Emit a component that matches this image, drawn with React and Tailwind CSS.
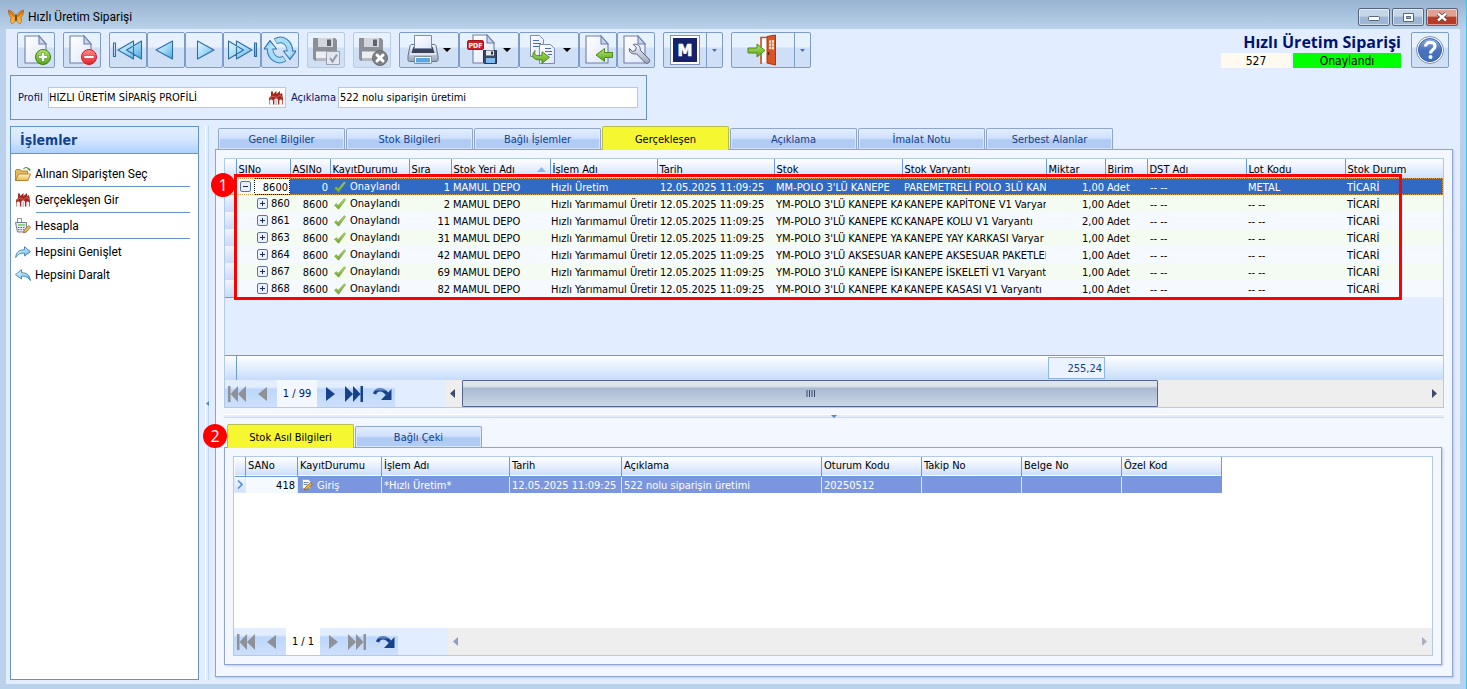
import React from "react";

/* ---------- icons ---------- */

const Svg = ({ w = 32, h = 32, vw = 32, vh = 32, children }) => (
  <svg width={w} height={h} viewBox={`0 0 ${vw} ${vh}`} className="block shrink-0" aria-hidden="true">
    {children}
  </svg>
);

const Defs = () => (
  <svg width="0" height="0" className="absolute" aria-hidden="true">
    <defs>
      <linearGradient id="page" x1="0" y1="0" x2="1" y2="1">
        <stop offset="0" stopColor="#ffffff" />
        <stop offset="1" stopColor="#dfe6fa" />
      </linearGradient>
      <linearGradient id="arrow" x1="0" y1="0" x2="1" y2="1">
        <stop offset="0" stopColor="#eaf8ff" />
        <stop offset="0.5" stopColor="#a5dcf8" />
        <stop offset="1" stopColor="#4ba3dd" />
      </linearGradient>
      <linearGradient id="green" x1="0" y1="0" x2="0" y2="1">
        <stop offset="0" stopColor="#b4e46c" />
        <stop offset="1" stopColor="#55a51c" />
      </linearGradient>
      <linearGradient id="red" x1="0" y1="0" x2="0" y2="1">
        <stop offset="0" stopColor="#ff8d8d" />
        <stop offset="1" stopColor="#e3202c" />
      </linearGradient>
      <linearGradient id="metal" x1="0" y1="0" x2="0" y2="1">
        <stop offset="0" stopColor="#f6f8fc" />
        <stop offset="1" stopColor="#9aa6bd" />
      </linearGradient>
      <linearGradient id="help" x1="0" y1="0" x2="0" y2="1">
        <stop offset="0" stopColor="#8fb0e4" />
        <stop offset="0.5" stopColor="#4a72bd" />
        <stop offset="1" stopColor="#3f6fc4" />
      </linearGradient>
      <linearGradient id="tick" x1="0" y1="0" x2="0" y2="1">
        <stop offset="0" stopColor="#c5e27b" />
        <stop offset="1" stopColor="#6fa525" />
      </linearGradient>
      <linearGradient id="folder" x1="0" y1="0" x2="0" y2="1">
        <stop offset="0" stopColor="#fff3c0" />
        <stop offset="1" stopColor="#e9b64e" />
      </linearGradient>
      <linearGradient id="wing" x1="0" y1="0" x2="0" y2="1">
        <stop offset="0" stopColor="#e07c12" />
        <stop offset="0.6" stopColor="#f5a733" />
        <stop offset="1" stopColor="#f9bf55" />
      </linearGradient>
      <linearGradient id="nav" x1="0" y1="0" x2="0" y2="1">
        <stop offset="0" stopColor="#5f83bd" />
        <stop offset="0.45" stopColor="#15428b" />
        <stop offset="1" stopColor="#15428b" />
      </linearGradient>
    </defs>
  </svg>
);

const Page = ({ x = 6, y = 2, w = 21, h = 27 }) => (
  <g stroke="#6d7fa8" strokeWidth="1.1">
    <path d={`M${x} ${y}h${w - 7}l7 8v${h - 8}h-${w}z`} fill="url(#page)" />
    <path d={`M${x + w - 7} ${y}v8h7z`} fill="#c8d4f0" />
  </g>
);

const NewIcon = () => (
  <Svg>
    <Page x={5} />
    <circle cx="23" cy="23" r="7.5" fill="url(#green)" stroke="#39800e" />
    <path d="M21.5 18.5h3v3h3v3h-3v3h-3v-3h-3v-3h3z" fill="#fff" stroke="#4c9518" strokeWidth=".6" />
  </Svg>
);
const DeleteIcon = () => (
  <Svg>
    <Page x={4} />
    <circle cx="23" cy="23" r="7.5" fill="url(#red)" stroke="#d01722" />
    <path d="M18 21.5h10v3H18z" fill="#fff" stroke="#cf2030" strokeWidth=".6" />
  </Svg>
);
const arrowProps = { fill: "url(#arrow)", stroke: "#2f6ea6", strokeWidth: 1.1, strokeLinejoin: "round" };
const FirstIcon = () => (
  <Svg>
    <path {...arrowProps} d="M1.5 9h2v13.500h-2zM21.500 7v18L6 16zM29.500 7v18L14.500 16z" />
  </Svg>
);
const PrevIcon = () => (
  <Svg>
    <path {...arrowProps} d="M22.500 7v18L6 16z" />
  </Svg>
);
const NextIcon = () => (
  <Svg>
    <path {...arrowProps} d="M9.500 7v18L26 16z" />
  </Svg>
);
const LastIcon = () => (
  <Svg>
    <path {...arrowProps} d="M28.500 9h2v13.500h-2zM10.500 7v18L26 16zM2.500 7v18L17.500 16z" />
  </Svg>
);
const CurvedArrow = () => (
  <g>
    <path d="M11.500 7.500C18 3.500 26 8 26 17.500" fill="none" stroke="#3a7cb4" strokeWidth="6.600" />
    <path {...arrowProps} d="M19.500 17h12.500L26 25.500z" />
    <path d="M11.900 7.300C18 3.500 26 8 26 18.500" fill="none" stroke="#a9ddf7" strokeWidth="4.600" />
  </g>
);
const RefreshIcon = () => (
  <Svg>
    <CurvedArrow />
    <g transform="rotate(180 16 16)">
      <CurvedArrow />
    </g>
  </Svg>
);
const Floppy = () => (
  <g>
    <path d="M3 4h22l2 2v21H5l-2-2z" fill="#8b8f97" />
    <path d="M8 4h15v9H8z" fill="#d3d6dc" />
    <path d="M17 5.500h4v6.500h-4z" fill="#5f646c" />
    <path d="M6 17.500h18v7H6z" fill="#eceef2" />
    <path d="M6 24.500h18V27H6z" fill="#b4b8bf" />
  </g>
);
const SaveCheckIcon = () => (
  <Svg>
    <Floppy />
    <path d="M16.500 17.500h13v13h-13z" fill="#e2e6ee" stroke="#9aa2b0" />
    <path d="M20 24l2.500 3.500L27 20.500" fill="none" stroke="#9299a5" strokeWidth="2" />
  </Svg>
);
const SaveCancelIcon = () => (
  <Svg>
    <Floppy />
    <circle cx="24" cy="24" r="7.500" fill="#7d8085" stroke="#6a6d72" />
    <path d="M21 21l6 6M27 21l-6 6" stroke="#fff" strokeWidth="3" strokeLinecap="round" />
  </Svg>
);
const PrintIcon = () => (
  <Svg>
    <path d="M3 12c0-1 1-1.500 2-1.500h22c1 0 2 .5 2 1.500l2 10v4c0 1-1 1.500-2 1.500H3c-1 0-2-.5-2-1.500v-4z" fill="url(#metal)" stroke="#65738f" />
    <path d="M6 14l1-2h18l1 2 1.500 5h-23z" fill="#39435a" />
    <path d="M7.500 1.500h17v13h-17z" fill="url(#page)" stroke="#7d8baa" />
    <path d="M7.500 22.500h17v7h-17z" fill="#fff" stroke="#7f90b1" />
    <path d="M9 24h14v4.500H9z" fill="#5aa7e4" />
    <path d="M3 20h26" stroke="#fff" />
  </Svg>
);
const PdfIcon = () => (
  <Svg>
    <Page x={6} y={1} w={21} h={28} />
    <rect x="0.500" y="6.500" width="16" height="9" rx="1.500" fill="#cf2027" stroke="#a5141b" />
    <text x="8.500" y="13.800" textAnchor="middle" fontSize="7" fontWeight="700" fill="#fff" className="font-['DejaVu_Sans_Condensed','DejaVu_Sans',sans-serif]">
      PDF
    </text>
    <path d="M16.500 16.500h13v13h-12l-1-1z" fill="#3b475f" stroke="#28324a" />
    <path d="M19 16.500h8v5h-8z" fill="#e4e8f1" />
    <path d="M24 17.500h2v3h-2z" fill="#28324a" />
    <path d="M19 24h9v5h-9z" fill="#7fbcf0" />
  </Svg>
);
const CopyIcon = () => (
  <Svg>
    <path d="M3.500 1.500h9l4 4v17h-13z" fill="url(#page)" stroke="#7b8cb6" />
    <path d="M6 6.500h6M6 9.500h8M6 12.500h8" stroke="#4d6cb0" />
    <path d="M12.500 10.500h11l4 4v15h-15z" fill="url(#page)" stroke="#7b8cb6" />
    <path d="M18 14.500h6M18 17.500h7M21 20.500h4" stroke="#4d6cb0" />
    <path d="M8 16.500c-1.500 6.500 2.500 5 7 4.800v-3.500l7.500 5.500-7.500 6v-3.500c-7 1-12.500-2.500-7-9.300z" fill="url(#green)" stroke="#4e8a17" />
  </Svg>
);
const ImportIcon = () => (
  <Svg>
    <Page x={4} y={2} w={22} h={27} />
    <path d="M14 21l8.500-6.500v4h8v5h-8v4z" fill="url(#green)" stroke="#4e8a17" />
  </Svg>
);
const WrenchIcon = () => (
  <Svg>
    <Page x={4} y={2} w={21} h={27} />
    <path
      d="M9.500 14.500l3 3 3-1 .8-3-3-3c4-1.200 7.500 1.500 7 5.800l9 9c1.500 3-1.800 5.200-4 3.500l-8.800-9c-4.200.8-8-1.500-7-5.300z"
      fill="url(#metal)"
      stroke="#55617c"
    />
  </Svg>
);
const MIcon = () => (
  <Svg>
    <rect x="1.500" y="1.500" width="29" height="29" fill="#fff" stroke="#7f8fb8" />
    <rect x="4" y="4" width="24" height="24" fill="#18216b" />
    <text x="16" y="21.500" textAnchor="middle" fontSize="15" fontWeight="700" fill="#fff" stroke="#fff" strokeWidth=".6" className="font-['DejaVu_Sans',sans-serif]">
      M
    </text>
  </Svg>
);
const DoorIcon = () => (
  <Svg>
    <path d="M14 30V3.500h6" fill="none" stroke="#cf4b22" strokeWidth="1.600" />
    <path d="M15 4.500h6v24h-6z" fill="#fff" />
    <path d="M20 2.500L28.500 1v30L20 29z" fill="#d95526" stroke="#ac3510" />
    <path d="M22 6.500l5-.5v9.500l-5-.5z" fill="#fbe3cf" />
    <path d="M24.500 6v9.500M22 9.200h5M22 12.200h5" stroke="#b87546" strokeWidth=".8" />
    <path d="M21.500 18v3" stroke="#6f1d08" strokeWidth="1.500" />
    <path d="M1 14h9v-4l8 6.500-8 6.500v-4H1z" fill="url(#green)" stroke="#4e8a17" />
  </Svg>
);
const HelpIcon = () => (
  <Svg>
    <circle cx="16" cy="16" r="13.500" fill="#fff" stroke="#7d8fb4" />
    <circle cx="16" cy="16" r="11.500" fill="url(#help)" stroke="#3d62a8" />
    <path d="M11.500 12.500c.2-5.500 9.500-5.500 9.500-.3 0 3.800-4.500 3.500-4.500 7.300" fill="none" stroke="#fff" strokeWidth="3.200" />
    <circle cx="16.500" cy="23" r="2" fill="#fff" />
  </Svg>
);

const ButterflyIcon = () => (
  <Svg w={16} h={16} vw={16} vh={16}>
    <path d="M7.500 7.500C6 3.500 3.500 1.500.5 1c-.2 3.500.7 6 2.700 7.500-1.200 1.800-1 4.500.8 6.500 2-.8 3.200-2.500 3.500-5z" fill="url(#wing)" stroke="#8a4a0c" strokeWidth=".5" />
    <path d="M8.500 7.500C10 3.500 12.500 1.500 15.500 1c.2 3.500-.7 6-2.700 7.500 1.200 1.800 1 4.500-.8 6.500-2-.8-3.200-2.500-3.500-5z" fill="url(#wing)" stroke="#8a4a0c" strokeWidth=".5" />
    <path d="M8 5.500v6.500" stroke="#5a3512" strokeWidth="1.400" />
    <path d="M1.300 2.300l5 5.500M14.700 2.300l-5 5.500" stroke="#a55a0e" strokeWidth=".8" />
  </Svg>
);
const FactoryIcon = () => (
  <Svg w={16} h={16} vw={16} vh={16}>
    <path d="M1 14.500V8l2-2V1.500h2V4l3.500-3v3L12 1v3l2-1 1 5.500v6z" fill="#a3281f" />
    <path d="M1.500 8.500L5 6l3.500 1.500L12 5l3 3.500" fill="none" stroke="#cf6157" strokeWidth="1" />
    <path d="M1.500 15v-4c0-2 3.500-2 3.500 0v4zM6.300 15v-5c0-2 3.700-2 3.700 0v5zM11.300 15v-4c0-2 3-2 3 0v4z" fill="#f3f1f3" />
    <path d="M8.200 10v5" stroke="#9aa0ae" strokeWidth=".8" />
  </Svg>
);
const FolderIcon = () => (
  <Svg w={16} h={16} vw={16} vh={16}>
    <path d="M.500 14.500V4.500l1-1H5l1 1.500h6.500v9.500z" fill="#e8b85a" stroke="#a97a28" strokeWidth=".9" />
    <path d="M.800 14.500L3.500 8h12L13 14.500z" fill="url(#folder)" stroke="#b0812e" strokeWidth=".9" />
    <path d="M8.500 3c1.500-2 4-2 5 0" fill="none" stroke="#3c9a2a" strokeWidth="1.200" />
    <path d="M11.800 2.500h3.400v2.800z" fill="#3c9a2a" />
  </Svg>
);
const CalcIcon = () => (
  <Svg w={16} h={16} vw={16} vh={16}>
    <path d="M2.500.5h4v4h-4z" fill="#fff" stroke="#7d8797" strokeWidth=".9" />
    <path d="M.5 4.500h11v9.500H2.500z" fill="#e6eaf3" stroke="#66728c" strokeWidth=".9" />
    <path d="M3 6h7v1.800H3z" fill="#8fcf7c" />
    <path d="M3 9.500h7M3 11.700h7" stroke="#5c6a88" strokeDasharray="1.500 1" />
    <path d="M8.500 15l.8-3 4.500-4.500 1.900 1.900-4.500 4.500z" fill="#f1b95c" stroke="#9c6b26" strokeWidth=".8" />
  </Svg>
);
const ForwardIcon = () => (
  <Svg w={16} h={16} vw={16} vh={16}>
    <path d="M.700 13.500C1 8 4.500 5.500 9.500 5.800V2.700l6 5-6 4.300V9.200C6 8.800 3 10 .700 13.500z" fill="url(#arrow)" stroke="#4180b4" strokeWidth=".9" />
  </Svg>
);
const BackIcon = () => (
  <Svg w={16} h={16} vw={16} vh={16}>
    <path d="M15.300 13.500C15 8 11.500 5.500 6.500 5.800V2.700l-6 5 6 4.300V9.200c3.500-.4 6.500.8 8.800 4.300z" fill="url(#arrow)" stroke="#4180b4" strokeWidth=".9" />
  </Svg>
);
const TickIcon = () => (
  <Svg w={12} h={12} vw={12} vh={12}>
    <path d="M.600 7.200l1.600-1.500 2 1.900L10.300.800l1.200.9L4.600 11.200z" fill="url(#tick)" stroke="#6c9c2c" strokeWidth=".7" />
  </Svg>
);
const EntryIcon = () => (
  <Svg w={12} h={12} vw={12} vh={12}>
    <path d="M1.500.500h6l2 2v7h-8z" fill="#fdfdff" stroke="#8da0cc" strokeWidth=".8" />
    <path d="M2.500 3.500h5M2.500 5.500h4" stroke="#6c86c8" />
    <path d="M3.500 11.200l.8-2.700 5.200-5 1.800 1.800-5.200 5z" fill="#f3b23a" stroke="#8f611b" strokeWidth=".8" />
  </Svg>
);

/* ---------- toolbar pieces ---------- */

const btn =
  "h-9 shrink-0 rounded-[2px] border border-[#7d9cc9] bg-linear-to-b from-[#e8f1fe] from-40% to-[#cfe0f6] to-45% flex items-center justify-center";

const IconButton = ({ label, children, disabled }) => (
  <button type="button" aria-label={label} disabled={disabled} className={`${btn} w-[38px] disabled:border-[#b9cce6]`}>
    {children}
  </button>
);

const MenuButton = ({ label, children }) => (
  <button type="button" aria-label={label} className={`${btn} w-[60px] gap-1`}>
    {children}
    <Svg w={8} h={4} vw={8} vh={4}>
      <path d="M0 0h8L4 4z" fill="#000" />
    </Svg>
  </button>
);

const SplitButton = ({ label, children, wide }) => (
  <div className={`${btn} ${wide ? "w-20" : "w-[60px]"}`}>
    <button type="button" aria-label={label} className="flex h-full flex-1 items-center justify-center">
      {children}
    </button>
    <button type="button" aria-label={`${label} seçenekleri`} className="flex h-full w-4 items-center justify-center border-l border-[#7d9cc9]">
      <Svg w={5} h={3} vw={5} vh={3}>
        <path d="M0 0h5L2.500 3z" fill="#3f73bd" />
      </Svg>
    </button>
  </div>
);

const Toolbar = () => (
  <div className="flex items-start pt-[3px] pr-[11px] pl-[11px]">
    <div className="flex gap-2" role="toolbar" aria-label="Araç çubuğu">
      <IconButton label="Yeni"><NewIcon /></IconButton>
      <IconButton label="Sil"><DeleteIcon /></IconButton>
      <div className="flex">
        <IconButton label="İlk"><FirstIcon /></IconButton>
        <IconButton label="Önceki"><PrevIcon /></IconButton>
        <IconButton label="Sonraki"><NextIcon /></IconButton>
        <IconButton label="Son"><LastIcon /></IconButton>
        <IconButton label="Yenile"><RefreshIcon /></IconButton>
      </div>
      <IconButton label="Kaydet" disabled><SaveCheckIcon /></IconButton>
      <IconButton label="Vazgeç" disabled><SaveCancelIcon /></IconButton>
      <div className="flex">
        <MenuButton label="Yazdır"><PrintIcon /></MenuButton>
        <MenuButton label="PDF"><PdfIcon /></MenuButton>
        <MenuButton label="Kopyala"><CopyIcon /></MenuButton>
        <IconButton label="Aktar"><ImportIcon /></IconButton>
        <IconButton label="Ayarlar"><WrenchIcon /></IconButton>
      </div>
      <SplitButton label="M"><MIcon /></SplitButton>
      <SplitButton label="Çıkış" wide><DoorIcon /></SplitButton>
    </div>
    <div className="ml-auto mr-[10px] flex flex-col items-end">
      <h1 className="h-[21px] text-[16px] leading-[21px] font-bold text-[#00136f] font-['Open_Sans',sans-serif]">Hızlı Üretim Siparişi</h1>
      <div className="flex gap-[2px] text-center text-[12px] leading-4">
        <output className="h-[15px] w-[70px] bg-[#fffaf0]">527</output>
        <output className="h-[15px] w-[108px] bg-[#00ff00]">Onaylandı</output>
      </div>
    </div>
    <IconButton label="Yardım"><HelpIcon /></IconButton>
  </div>
);

/* ---------- tabs ---------- */

const Tab = ({ active, children }) => (
  <button
    type="button"
    role="tab"
    aria-selected={active}
    className={
      active
        ? "relative z-10 -mb-px h-6 w-[127px] rounded-t-[2px] border border-b-0 border-[#b9bd4c] bg-[#f5f730] pt-[2px] text-black"
        : "h-[21px] w-[127px] rounded-t-[2px] border border-b-0 border-[#8fa5cf] bg-linear-to-b from-[#dfebff] from-10% via-[#d0e1fd] via-45% to-[#b0cbf4] to-55% pt-[2px] text-[#15428b] inset-ring inset-ring-[#e6f0ff]/70"
    }
  >
    {children}
  </button>
);

const Tabs = ({ items, current, label }) => (
  <div role="tablist" aria-label={label} className="flex h-[23px] items-end gap-px pl-[3px]">
    {items.map((t) => (
      <Tab key={t} active={t === current}>{t}</Tab>
    ))}
  </div>
);

/* ---------- data ---------- */

const columns = [
  ["SINo", "w-[54px]"],
  ["ASINo", "w-10"],
  ["KayıtDurumu", "w-[79px]"],
  ["Sıra", "w-[42px]"],
  ["Stok Yeri Adı", "w-[99px]"],
  ["İşlem Adı", "w-[107px]"],
  ["Tarih", "w-[117px]"],
  ["Stok", "w-32"],
  ["Stok Varyantı", "w-36"],
  ["Miktar", "w-[59px]"],
  ["Birim", "w-[42px]"],
  ["DST Adı", "w-[99px]"],
  ["Lot Kodu", "w-[99px]"],
  ["Stok Durum", "w-auto"],
];

const rows = [
  { no: "8600", parent: "0", order: "1", op: "Hızlı Üretim", stock: "MM-POLO 3'LÜ KANEPE", variant: "PAREMETRELİ POLO 3LÜ KAN", qty: "1,00", lot: "METAL", root: true },
  { no: "860", parent: "8600", order: "2", op: "Hızlı Yarımamul Üretim", stock: "YM-POLO 3'LÜ KANEPE KA", variant: "KANEPE KAPİTONE V1 Varyar", qty: "1,00", lot: "-- --" },
  { no: "861", parent: "8600", order: "11", op: "Hızlı Yarımamul Üretim", stock: "YM-POLO 3'LÜ KANEPE KO", variant: "KANAPE KOLU V1 Varyantı", qty: "2,00", lot: "-- --" },
  { no: "863", parent: "8600", order: "31", op: "Hızlı Yarımamul Üretim", stock: "YM-POLO 3'LÜ KANEPE YA", variant: "KANEPE YAY KARKASI Varyar", qty: "1,00", lot: "-- --" },
  { no: "864", parent: "8600", order: "42", op: "Hızlı Yarımamul Üretim", stock: "YM-POLO 3'LÜ AKSESUAR", variant: "KANEPE AKSESUAR PAKETLEM", qty: "1,00", lot: "-- --" },
  { no: "867", parent: "8600", order: "69", op: "Hızlı Yarımamul Üretim", stock: "YM-POLO 3'LÜ KANEPE İSK", variant: "KANEPE İSKELETİ V1 Varyantı", qty: "1,00", lot: "-- --" },
  { no: "868", parent: "8600", order: "82", op: "Hızlı Yarımamul Üretim", stock: "YM-POLO 3'LÜ KANEPE KA", variant: "KANEPE KASASI V1 Varyantı", qty: "1,00", lot: "-- --" },
];

const Expander = ({ open }) => (
  <button type="button" aria-label={open ? "Daralt" : "Genişlet"} className="shrink-0">
    <Svg w={11} h={11} vw={11} vh={11}>
      <rect x=".5" y=".5" width="10" height="10" rx="1.500" fill="#e9effb" stroke="#5f7395" />
      <path d={open ? "M3 5.500h5" : "M3 5.500h5M5.500 3v5"} stroke="#1c2c52" />
    </Svg>
  </button>
);

const Clip = ({ children }) => <div className="overflow-hidden whitespace-nowrap">{children}</div>;

const headCell = "h-[19px] overflow-hidden border-l border-[#6a9adb] p-0 pl-[2px] text-left font-normal whitespace-nowrap";
const headRow = "bg-linear-to-b from-white to-[#cfe0fb]";

const Badge = ({ children, place }) => (
  <span className={`absolute z-30 flex size-6 items-center justify-center rounded-full bg-[#ff0000] text-[16px] leading-6 text-white font-['Open_Sans',sans-serif] ${place}`}>
    {children}
  </span>
);

const DetailTable = () => (
  <table className="w-full table-fixed border-collapse">
    <colgroup>
      <col className="w-[11px]" />
      {columns.map(([name, w]) => (
        <col key={name} className={w} />
      ))}
    </colgroup>
    <thead className="leading-4">
      <tr className={headRow}>
        <th className="p-0" aria-label="Satır" />
        {columns.map(([name]) => (
          <th key={name} scope="col" className={`${headCell} pt-[2px]`}>
            {name === "Stok Yeri Adı" ? (
              <span className="flex items-center justify-between pr-1">
                {name}
                <Svg w={9} h={5} vw={9} vh={5}>
                  <path d="M0 5h9L4.500 0z" fill="#8fb5ea" />
                </Svg>
              </span>
            ) : (
              name
            )}
          </th>
        ))}
      </tr>
    </thead>
    <tbody className="leading-[15px]">
      {rows.map((r, i) => {
        const tone = r.root
          ? "bg-[#316ac5] text-white outline-1 -outline-offset-1 outline-dotted outline-[#d29a4a]"
          : i % 2
            ? "bg-[#f4fcf2]"
            : "bg-[#f4faff]";
        return (
          <tr key={r.no} className={`h-[17px] ${tone} [&>td]:p-0`}>
            <td className="bg-linear-to-b from-[#eef5ff] to-[#c6dbfa]" />
            <td className={`text-black ${i % 2 ? "bg-[#f4fcf2]" : "bg-[#f4faff]"}`}>
              {r.root ? (
                <div className="flex h-[17px] items-center gap-[3px] pl-1">
                  <Expander open />
                  <span className="h-[17px] flex-1 border border-dotted border-black bg-white pr-px text-right leading-[17px]">{r.no}</span>
                </div>
              ) : (
                <div className="flex h-[17px] items-center gap-[3px] overflow-hidden pl-[21px]">
                  <Expander />
                  <span className="leading-[17px]">{r.no}</span>
                </div>
              )}
            </td>
            <td><div className="pt-[2px] pr-[2px] text-right">{r.parent}</div></td>
            <td>
              <div className="flex h-[17px] items-center gap-1 pl-1 whitespace-nowrap">
                <TickIcon />
                <span className="leading-[17px]">Onaylandı</span>
              </div>
            </td>
            <td><div className="pt-[2px] pr-px text-right">{r.order}</div></td>
            <td><div className="pt-[2px] pl-[2px]"><Clip>MAMUL DEPO</Clip></div></td>
            <td><div className="pt-[2px] pl-px"><Clip>{r.op}</Clip></div></td>
            <td><div className="pt-[2px] pl-[3px]"><Clip>12.05.2025 11:09:25</Clip></div></td>
            <td><div className="pt-[2px] pl-[2px]"><Clip>{r.stock}</Clip></div></td>
            <td><div className="pt-[2px] pl-[2px]"><Clip>{r.variant}</Clip></div></td>
            <td><div className="pt-[2px] pr-px text-right">{r.qty}</div></td>
            <td><div className="pt-[2px] pl-[2px]">Adet</div></td>
            <td><div className="pt-[2px] pl-[3px]">-- --</div></td>
            <td><div className="pt-[2px] pl-[2px]">{r.lot}</div></td>
            <td><div className="pt-[2px] pl-[2px]">TİCARİ</div></td>
          </tr>
        );
      })}
    </tbody>
  </table>
);

const glyphs = {
  first: "M0 0h2.500v16H0zM10 0v16L2.500 8zM18 0v16L10 8z",
  prev: "M9 1v14L0 8z",
  next: "M0 1v14l9-7z",
  last: "M15.500 0H18v16h-2.500zM8 0v16l7.500-8zM0 0v16l8-8z",
};

const NavButton = ({ kind, label, off }) => (
  <button type="button" aria-label={label} disabled={off} className="shrink-0">
    {kind === "jump" ? (
      <Svg w={19} h={14} vw={19} vh={14}>
        <path d="M1.500 7C3.500 1.500 10 1 14 7" fill="none" stroke="url(#nav)" strokeWidth="3.400" />
        <path d="M18.500 2v11H8z" fill="#15428b" />
      </Svg>
    ) : (
      <Svg w={kind === "first" || kind === "last" ? 18 : 9} h={16} vw={kind === "first" || kind === "last" ? 18 : 9} vh={16}>
        <path d={glyphs[kind]} fill={off ? "#8e9298" : "#15428b"} />
      </Svg>
    )}
  </button>
);

const Navigator = ({ text, off, textTone, children }) => {
  const seg = "flex h-full items-center bg-linear-to-b from-[#e2eeff] from-25% via-[#bdd7fc] via-35% to-[#cde0fb]";
  return (
    <div className="flex h-[27px] items-center bg-[#e2eeff]">
      <div className={`${seg} w-[52px] gap-3 pl-[3px]`}>
        <NavButton kind="first" label="İlk kayıt" off />
        <NavButton kind="prev" label="Önceki kayıt" off />
      </div>
      <span className={`flex h-full items-center justify-center ${textTone}`}>{text}</span>
      <div className={`${seg} w-[78px] gap-[10px] pl-[9px]`}>
        <NavButton kind="next" label="Sonraki kayıt" off={off} />
        <NavButton kind="last" label="Son kayıt" off={off} />
        <NavButton kind="jump" label="Kayda git" />
      </div>
      {children}
    </div>
  );
};

const ScrollArrow = ({ dir, tone }) => (
  <Svg w={5} h={9} vw={5} vh={9}>
    <path d={dir === "left" ? "M5 0v9L0 4.500z" : "M0 0v9l5-4.500z"} fill={tone} />
  </Svg>
);

const Splitter = ({ vertical }) =>
  vertical ? (
    <div role="separator" aria-orientation="vertical" className="mx-[6px] flex w-1 items-center border-r border-l border-r-[#bcd8fd] border-l-white bg-[#e2eeff]">
      <Svg w={3} h={5} vw={3} vh={5}>
        <path d="M3 0v5L0 2.500z" fill="#4f84cf" />
      </Svg>
    </div>
  ) : (
    <div role="separator" className="mt-[6px] flex h-1 items-center justify-center border-t border-b border-t-white border-b-[#c3dcfd] bg-[#e2eeff]">
      <Svg w={6} h={3} vw={6} vh={3}>
        <path d="M0 0h6L3 3z" fill="#4f84cf" />
      </Svg>
    </div>
  );

const lowerColumns = [
  ["SANo", "w-[52px]"],
  ["KayıtDurumu", "w-[84px]"],
  ["İşlem Adı", "w-32"],
  ["Tarih", "w-28"],
  ["Açıklama", "w-[200px]"],
  ["Oturum Kodu", "w-[100px]"],
  ["Takip No", "w-[100px]"],
  ["Belge No", "w-[100px]"],
  ["Özel Kod", "w-[100px]"],
];

const LowerTable = () => (
  <table className="w-[987px] table-fixed border-collapse border-r border-[#6a9adb]">
    <colgroup>
      <col className="w-[11px]" />
      {lowerColumns.map(([name, w]) => (
        <col key={name} className={w} />
      ))}
    </colgroup>
    <thead className="leading-4">
      <tr className={`${headRow} border-b border-[#6a9adb]`}>
        <th className="p-0" aria-label="Satır" />
        {lowerColumns.map(([name]) => (
          <th key={name} scope="col" className={headCell}>{name}</th>
        ))}
      </tr>
    </thead>
    <tbody className="leading-[15px]">
      <tr className="h-[17px] bg-[#7b96df] text-white [&>td]:border-l [&>td]:border-[#dfe8fb] [&>td]:p-0">
        <td className="bg-linear-to-b from-[#f4f9ff] to-[#cfe0fb]">
          <div className="pl-[2px]">
            <Svg w={6} h={9} vw={6} vh={9}>
              <path d="M1 .500l4 4-4 4" fill="none" stroke="#5b8fd8" strokeWidth="1.600" />
            </Svg>
          </div>
        </td>
        <td className="bg-[#f4faff] text-black"><div className="pt-px pr-[2px] text-right">418</div></td>
        <td>
          <div className="flex items-center gap-1 pt-px pl-[3px]"><EntryIcon />Giriş</div>
        </td>
        <td><div className="pt-px pl-[2px]">*Hızlı Üretim*</div></td>
        <td><div className="pt-px pl-[2px] whitespace-nowrap">12.05.2025 11:09:25</div></td>
        <td><div className="pt-px pl-[2px]">522 nolu siparişin üretimi</div></td>
        <td><div className="pt-px pl-[2px]">20250512</div></td>
        <td /><td /><td />
      </tr>
    </tbody>
  </table>
);

/* ---------- sidebar ---------- */

const actions = [
  ["Alınan Siparişten Seç", FolderIcon, true],
  ["Gerçekleşen Gir", FactoryIcon, true],
  ["Hesapla", CalcIcon, true],
  ["Hepsini Genişlet", ForwardIcon, false],
  ["Hepsini Daralt", BackIcon, false],
];

const Sidebar = () => (
  <aside className="flex w-[189px] shrink-0 flex-col border border-[#6593cf] bg-white">
    <h2 className="h-[27px] border-b border-[#6593cf] bg-linear-to-b from-[#e3efff] via-[#d3e5ff] to-[#aed1ff] pl-[9px] text-[14px] leading-[26px] font-bold text-[#15428b]">
      İşlemler
    </h2>
    <ul className="pt-2 text-[12px] font-[Roboto,sans-serif]">
      {actions.map(([name, Icon, line]) => (
        <li key={name} className={line ? "h-[26px]" : "h-[23px]"}>
          <button type="button" className="flex h-6 w-full items-center gap-1 pl-1 text-left">
            <Icon />
            {name}
          </button>
          {line && <div className="mr-2 ml-[25px] h-px bg-[#6593cf]" />}
        </li>
      ))}
    </ul>
  </aside>
);

/* ---------- window ---------- */

const caption = "flex h-[18px] w-8 items-center justify-center rounded-[2px] border border-[#56657d] inset-ring inset-ring-white/50";

export default function App() {
  return (
    <div className="flex min-h-screen flex-col border-r border-[#35c9f1] bg-[#b9d1ea] pb-[5px] text-[11px] leading-[14px] text-black font-['DejaVu_Sans_Condensed','DejaVu_Sans',sans-serif]">
      <Defs />
      <header className="flex h-[29px] items-center bg-linear-to-b from-[#99b4d1] to-[#b9d1ea] pt-[5px] pr-2 pl-2">
        <ButterflyIcon />
        <span className="ml-1 text-[12px] leading-4 font-[Roboto,sans-serif]">Hızlı Üretim Siparişi</span>
        <div className="ml-auto flex gap-[2px]">
          <button type="button" aria-label="Simge durumuna küçült" className={`${caption} bg-linear-to-b from-[#c6d6e9] from-45% to-[#9db6d3] to-50%`}>
            <Svg w={12} h={10} vw={12} vh={10}><rect x=".5" y="4.500" width="11" height="4" rx="1" fill="#fff" stroke="#56657d" /></Svg>
          </button>
          <button type="button" aria-label="Ekranı kapla" className={`${caption} bg-linear-to-b from-[#c6d6e9] from-45% to-[#9db6d3] to-50%`}>
            <Svg w={11} h={9} vw={11} vh={9}>
              <path d="M.500.500h10v8H.500zM3.500 3.500v2h4v-2z" fill="#fff" stroke="#56657d" fillRule="evenodd" />
            </Svg>
          </button>
          <button type="button" aria-label="Kapat" className={`${caption} border-[#5a1f1f] bg-linear-to-b from-[#e0a194] from-45% to-[#b93a28] to-50%`}>
            <Svg w={12} h={10} vw={12} vh={10}>
              <path d="M2 1.500l8 7M10 1.500l-8 7" stroke="#5a3a3a" strokeWidth="4" />
              <path d="M2 1.500l8 7M10 1.500l-8 7" stroke="#fff" strokeWidth="2.400" />
            </Svg>
          </button>
        </div>
      </header>

      <main className="mr-[6px] ml-[6px] flex flex-1 flex-col bg-[#e2eeff] pb-1">
        <Toolbar />

        <form className="mt-[7px] ml-1 flex h-[45px] w-[637px] items-center border border-[#6593cf] pr-2 pl-[7px]" onSubmit={(e) => e.preventDefault()}>
          <label htmlFor="profile" className="w-[30px] text-[#00136f]">Profil</label>
          <div className="flex h-[21px] w-[238px] items-center border border-[#b3c9e8] bg-white pr-px">
            <input id="profile" defaultValue="HIZLI ÜRETİM SİPARİŞ PROFİLİ" className="h-full min-w-0 flex-1 outline-none" />
            <button type="button" aria-label="Profil seç"><FactoryIcon /></button>
          </div>
          <label htmlFor="note" className="ml-[5px] w-[47px] whitespace-nowrap text-[#00136f]">Açıklama</label>
          <input id="note" defaultValue="522 nolu siparişin üretimi" className="h-[21px] min-w-0 flex-1 border border-[#b3c9e8] bg-white pl-px outline-none" />
        </form>

        <div className="mt-[6px] flex flex-1 pr-[7px] pl-1">
          <Sidebar />
          <Splitter vertical />

          <section className="mb-[3px] flex min-w-0 flex-1 flex-col">
            <Tabs
              label="Sipariş bölümleri"
              current="Gerçekleşen"
              items={["Genel Bilgiler", "Stok Bilgileri", "Bağlı İşlemler", "Gerçekleşen", "Açıklama", "İmalat Notu", "Serbest Alanlar"]}
            />
            <div className="flex flex-1 flex-col border border-[#8fa5cf] bg-[#f3f7ff] px-2 pt-2 pb-[11px] shadow-[1px_1px_2px_#b4c8ea]">
              <div className="relative border border-[#b3c9e8] bg-[#e2eeff]">
                <Badge place="-left-[14px] top-[14px]">1</Badge>
                <div className="pointer-events-none absolute top-[15px] right-[41px] left-[9px] z-20 h-[126px] border-3 border-[#ff0000]" />
                <DetailTable />
                <div className="h-[58px]">
                  <div className="h-px w-[11px] bg-[#6a9adb]" />
                </div>
                <div className="flex h-[25px] border-t border-[#6a9adb] bg-linear-to-b from-white to-[#c6dcfb]">
                  <div className="w-3 border-r border-[#6a9adb]" />
                  <output className="mt-px ml-[811px] h-[22px] w-[57px] border border-[#8fb5ea] bg-[#eaf3ff] pr-[2px] text-right leading-[22px] text-[#15428b]">255,24</output>
                </div>
                <Navigator text="1 / 99" textTone="w-10 bg-[#f3f7ff] text-[#00136f]">
                  <div className="ml-[50px] flex h-full flex-1 items-center bg-[#eeeeee] pr-[6px] pl-[5px]">
                    <ScrollArrow dir="left" tone="#3f4b6b" />
                    <div className="ml-[7px] flex h-full flex-33 items-center justify-center rounded-[1px] border border-[#56658f] bg-linear-to-b from-[#dce4ec] from-20% via-[#a9bad0] via-30% to-[#cbd8e6]">
                      <Svg w={9} h={7} vw={9} vh={7}>
                        <path d="M1 0v7M3.500 0v7M6 0v7M8.500 0v7" stroke="#3f4b6b" />
                      </Svg>
                    </div>
                    <span className="flex-13" />
                    <ScrollArrow dir="right" tone="#3f4b6b" />
                  </div>
                </Navigator>
              </div>

              <Splitter />

              <div className="relative mt-[6px]">
                <Badge place="-left-[21px] top-0">2</Badge>
                <Tabs label="Alt bölümler" current="Stok Asıl Bilgileri" items={["Stok Asıl Bilgileri", "Bağlı Çeki"]} />
              </div>
              <div className="mr-[2px] flex flex-1 flex-col border border-[#8fa5cf] bg-[#f3f7ff] p-2 shadow-[1px_1px_2px_#b4c8ea]">
                <div className="flex flex-1 flex-col border border-[#b3c9e8] bg-white">
                  <LowerTable />
                  <div className="mt-auto">
                    <Navigator text="1 / 1" off textTone="w-[34px] bg-white text-black">
                      <div className="ml-[50px] flex h-full flex-1 items-center justify-between bg-[#eeeeee] px-[5px]">
                        <ScrollArrow dir="left" tone="#8f9dc4" />
                        <ScrollArrow dir="right" tone="#a9b0c2" />
                      </div>
                    </Navigator>
                  </div>
                </div>
              </div>
            </div>
          </section>
        </div>
      </main>
    </div>
  );
}
